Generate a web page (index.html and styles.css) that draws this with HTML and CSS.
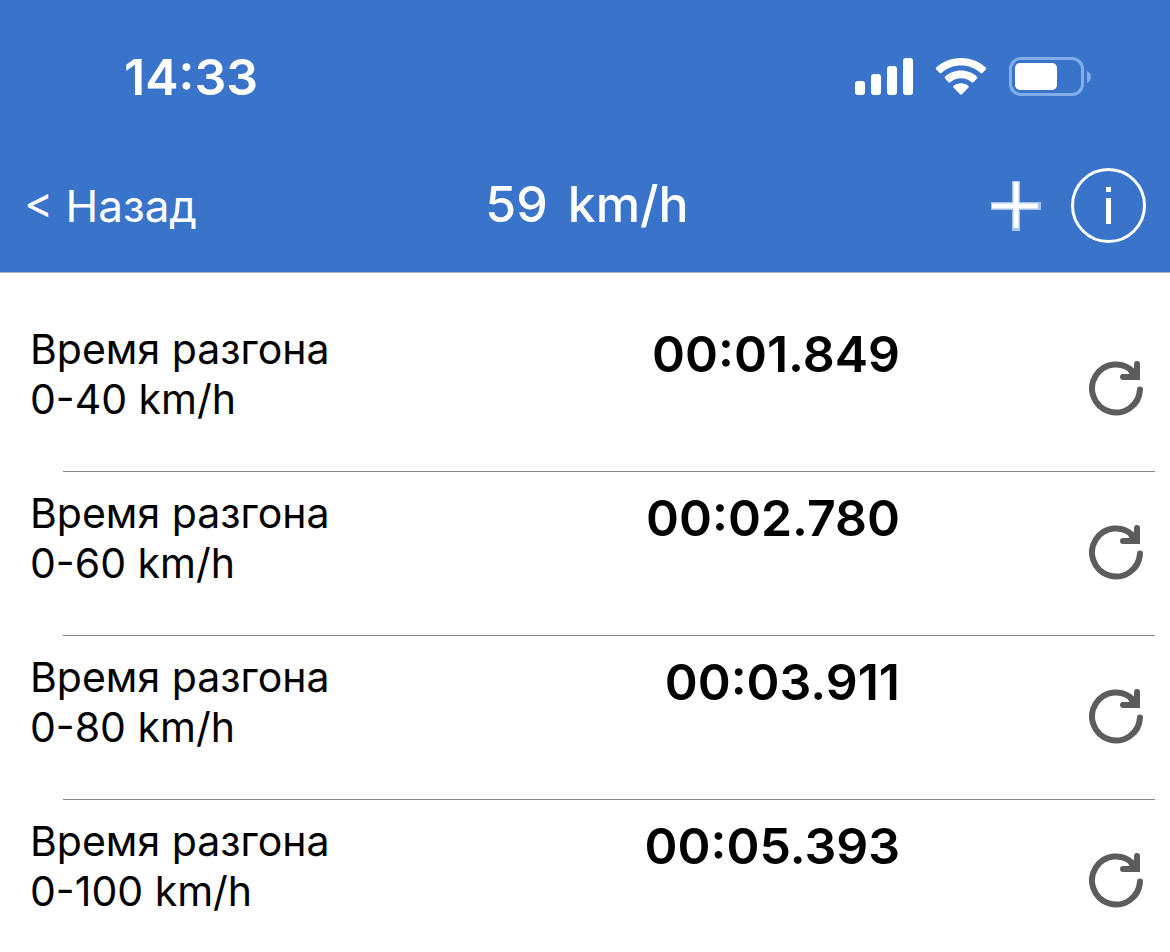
FILE: index.html
```html
<!DOCTYPE html>
<html lang="ru">
<head>
<meta charset="utf-8">
<meta name="viewport" content="width=device-width, initial-scale=1">
<title>Время разгона</title>
<link rel="stylesheet" href="styles.css">
</head>
<body>
<svg class="sprite" aria-hidden="true">
  <symbol id="reload" viewBox="0 0 56 56">
    <path d="M51 29.500A24 24 0 1 1 44.500 12" fill="none" stroke="currentColor" stroke-width="6" stroke-linecap="round"/>
    <path d="M48 4V17H34" fill="none" stroke="currentColor" stroke-width="6" stroke-linecap="round"/>
    <path d="M36 7L45 12V4H51V20H40L42 16Z" fill="currentColor"/>
  </symbol>
</svg>
<header class="header">
  <div class="status">
    <time class="clock">14:33</time>
    <div class="indicators">
      <svg class="signal" viewBox="0 0 58 38" role="img" aria-label="Сигнал" fill="currentColor">
        <rect x="0" y="23" width="10" height="14" rx="3"/>
        <rect x="16" y="16" width="10" height="21" rx="3"/>
        <rect x="32" y="8" width="10" height="29" rx="3"/>
        <rect x="48" y="0" width="10" height="37" rx="3"/>
      </svg>
      <svg class="wifi" viewBox="0 0 52 38" role="img" aria-label="Wi-Fi" fill="currentColor">
        <path d="M26 0C16 0 7.500 3.700 1.200 9.600Q.3 10.500 1.200 11.400L4.700 15Q5.600 15.900 6.500 15C11.700 10.200 18.500 7.600 26 7.600S40.300 10.200 45.500 15Q46.400 15.900 47.300 15L50.800 11.400Q51.700 10.500 50.800 9.600C44.500 3.700 36 0 26 0Z"/>
        <path d="M26 12.600C19.700 12.600 14.200 14.900 10 18.800Q9.100 19.700 10 20.600L13.600 24.200Q14.500 25 15.400 24.200C18.300 21.600 22 20.200 26 20.200S33.700 21.600 36.600 24.200Q37.500 25 38.400 24.200L42 20.600Q42.900 19.700 42 18.800C37.800 14.900 32.300 12.600 26 12.600Z"/>
        <path d="M26 25.300C23 25.300 20.500 26.300 18.500 28Q17.700 28.800 18.500 29.600L25 36.300Q26 37.200 27 36.300L33.500 29.600Q34.300 28.800 33.500 28C31.500 26.300 29 25.300 26 25.300Z"/>
      </svg>
      <svg class="battery" viewBox="0 0 82 40" role="img" aria-label="Батарея">
        <rect x="1.500" y="1.500" width="72" height="36" rx="10.500" fill="none" stroke="#82aee8" stroke-width="3"/>
        <path d="M78 14Q82 16 82 20T78 26Z" fill="#82aee8"/>
        <rect x="6" y="6" width="42" height="27" rx="5" fill="currentColor"/>
      </svg>
    </div>
  </div>
  <nav class="nav">
    <a class="back" href="#">&lt; Назад</a>
    <h1 class="title"><span>59</span> <span>km/h</span></h1>
    <div class="actions">
      <button class="action" type="button" aria-label="Добавить">
        <svg class="plus" viewBox="0 0 52 52">
          <path d="M26 1V51M1 26H51" stroke="#a9c3e8" stroke-width="8"/>
          <path d="M26 2V48M2 26H48" stroke="#fff" stroke-width="5"/>
        </svg>
      </button>
      <button class="action" type="button" aria-label="Информация">
        <svg class="info" viewBox="0 0 75 75">
          <circle cx="37.500" cy="37.500" r="36" fill="none" stroke="currentColor" stroke-width="3"/>
          <path d="M35 19H40V24H35ZM35 30H40V56H35Z" fill="currentColor"/>
        </svg>
      </button>
    </div>
  </nav>
</header>
<main>
  <ul class="list">
    <li class="row">
      <p class="label">Время разгона<br>0-40 km/h</p>
      <time class="value">00:01.849</time>
      <button class="reset" type="button" aria-label="Сбросить 0-40"><svg class="reload"><use href="#reload"/></svg></button>
    </li>
    <li class="row">
      <p class="label">Время разгона<br>0-60 km/h</p>
      <time class="value">00:02.780</time>
      <button class="reset" type="button" aria-label="Сбросить 0-60"><svg class="reload"><use href="#reload"/></svg></button>
    </li>
    <li class="row">
      <p class="label">Время разгона<br>0-80 km/h</p>
      <time class="value">00:03.911</time>
      <button class="reset" type="button" aria-label="Сбросить 0-80"><svg class="reload"><use href="#reload"/></svg></button>
    </li>
    <li class="row">
      <p class="label">Время разгона<br>0-100 km/h</p>
      <time class="value">00:05.393</time>
      <button class="reset" type="button" aria-label="Сбросить 0-100"><svg class="reload"><use href="#reload"/></svg></button>
    </li>
  </ul>
</main>
</body>
</html>
```
FILE: styles.css
```css
* {
  box-sizing: border-box;
}

body {
  margin: 0;
  background: #fff;
  color: #000;
  font-family: Inter, "Liberation Sans", sans-serif;
}

button {
  display: block;
  padding: 0;
  border: 0;
  background: none;
  color: inherit;
  cursor: pointer;
}

svg {
  display: block;
}

.sprite {
  position: absolute;
  width: 0;
  height: 0;
}

.header {
  background: #3974ca;
  border-bottom: 1px solid #a9b4c6;
  color: #fff;
}

.status {
  display: flex;
  align-items: center;
  justify-content: space-between;
  padding: 47px 79px 0 124px;
}

.clock {
  font-size: 50px;
  font-weight: 600;
  line-height: 60px;
}

.indicators {
  display: flex;
  align-items: center;
  gap: 22px;
}

.signal {
  width: 58px;
  height: 38px;
}

.wifi {
  width: 52px;
  height: 38px;
}

.battery {
  width: 82px;
  height: 40px;
}

.nav {
  display: grid;
  grid-template-columns: 1fr auto 1fr;
  align-items: center;
  padding: 61px 24px 29px;
}

.back {
  color: inherit;
  font-size: 44px;
  font-weight: 400;
  line-height: 60px;
  text-decoration: none;
}

.title {
  display: flex;
  gap: 20px;
  margin: 0;
  padding: 0 0 4px 4px;
  font-size: 50px;
  font-weight: 500;
  line-height: 60px;
}

.actions {
  display: flex;
  align-items: center;
  justify-content: flex-end;
  gap: 29px;
}

.plus {
  width: 52px;
  height: 52px;
}

.info {
  width: 75px;
  height: 75px;
}

.list {
  margin: 0;
  padding: 34px 0 0;
  list-style: none;
}

.row {
  display: grid;
  grid-template-columns: 1fr auto 245px;
  align-items: start;
  padding: 16px 25px 0 30px;
}

.row:not(:last-child)::after {
  content: "";
  grid-column: 1 / -1;
  height: 1px;
  margin: 47px -10px 0 33px;
  background: #8a8a8a;
}

.row:first-child {
  padding-top: 17px;
}

.label {
  margin: 0;
  font-size: 41px;
  line-height: 50px;
}

.value {
  font-size: 50px;
  font-weight: 600;
  line-height: 60px;
}

.reset {
  justify-self: end;
  margin-top: 36px;
  color: #5c5c5c;
}

.reload {
  width: 56px;
  height: 56px;
}
```
